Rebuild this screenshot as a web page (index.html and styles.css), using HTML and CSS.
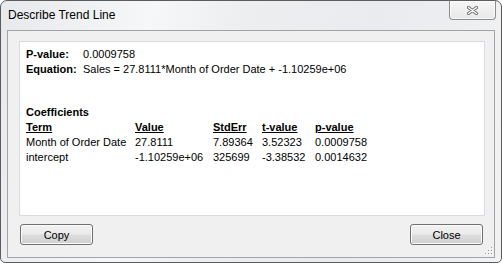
FILE: index.html
```html
<!doctype html>
<html>
<head>
  <link rel="stylesheet" href="styles.css">
</head>
<body>
  <div class="window">
    <div class="titlebar">
      <span class="title">Describe Trend Line</span>
      <button class="caption-close" title="Close">
        <svg width="11" height="9" viewBox="0 0 11 9">
          <path d="M1.5 1.5 L9.5 7.5 M1.5 7.5 L9.5 1.5" stroke="#6f6f6f" stroke-width="3.2" stroke-linecap="round" fill="none"/>
          <path d="M1.5 1.5 L9.5 7.5 M1.5 7.5 L9.5 1.5" stroke="#ffffff" stroke-width="1.3" stroke-linecap="round" fill="none"/>
        </svg>
      </button>
    </div>

    <div class="client">
      <div class="panel">
        <div class="summary">
          <b>P-value:</b><span>0.0009758</span>
          <b>Equation:</b><span>Sales = 27.8111*Month of Order Date + -1.10259e+06</span>
        </div>

        <div class="coef-title">Coefficients</div>
        <div class="coef-table">
          <span class="th">Term</span>
          <span class="th">Value</span>
          <span class="th">StdErr</span>
          <span class="th">t-value</span>
          <span class="th">p-value</span>

          <span>Month of Order Date</span>
          <span>27.8111</span>
          <span>7.89364</span>
          <span>3.52323</span>
          <span>0.0009758</span>

          <span>intercept</span>
          <span>-1.10259e+06</span>
          <span>325699</span>
          <span>-3.38532</span>
          <span>0.0014632</span>
        </div>
      </div>

      <div class="actions">
        <button class="btn">Copy</button>
        <button class="btn">Close</button>
      </div>

      <svg class="grip" width="8" height="8" viewBox="0 0 8 8">
        <rect x="6" y="0" width="1" height="1" fill="#9a9a9a"/>
        <rect x="3" y="3" width="1" height="1" fill="#9a9a9a"/>
        <rect x="6" y="3" width="1" height="1" fill="#9a9a9a"/>
        <rect x="0" y="6" width="1" height="1" fill="#9a9a9a"/>
        <rect x="3" y="6" width="1" height="1" fill="#9a9a9a"/>
        <rect x="6" y="6" width="1" height="1" fill="#9a9a9a"/>
        <rect x="7" y="1" width="1" height="1" fill="#ffffff"/>
        <rect x="4" y="4" width="1" height="1" fill="#ffffff"/>
        <rect x="7" y="4" width="1" height="1" fill="#ffffff"/>
        <rect x="1" y="7" width="1" height="1" fill="#ffffff"/>
        <rect x="4" y="7" width="1" height="1" fill="#ffffff"/>
        <rect x="7" y="7" width="1" height="1" fill="#ffffff"/>
      </svg>
    </div>
  </div>
</body>
</html>
```

FILE: styles.css
```css
html, body {
  margin: 0;
  background: #ffffff;
  font-family: "Liberation Sans", Arial, sans-serif;
  font-size: 11px;
  color: #000;
}
.window {
  box-sizing: border-box;
  width: 502px;
  height: 263px;
  border: 1px solid #5c5c5c;
  border-radius: 7px 7px 5px 5px;
  padding: 0 6px 4px 6px;
  display: flex;
  flex-direction: column;
  background: linear-gradient(100deg, #e7e9ec 0%, #f6f7f8 28%, #eceef0 45%, #e9ebee 70%, #f1f2f4 100%);
}
.titlebar {
  height: 29px;
  display: flex;
  justify-content: space-between;
  align-items: flex-start;
  margin-right: -1px;
}
.title {
  padding: 7px 0 0 1px;
  font-size: 12px;
  line-height: 14px;
  color: #000;
}
.caption-close {
  box-sizing: border-box;
  width: 47px;
  height: 20px;
  margin-top: -1px;
  padding: 0;
  border: 1px solid #8c8c8c;
  border-top-color: #5c5c5c;
  border-radius: 0 0 4px 4px;
  background: linear-gradient(#f6f6f6, #e8e8e8);
  box-shadow: inset 0 0 0 1px rgba(255, 255, 255, 0.7);
  display: flex;
  align-items: center;
  justify-content: center;
}
.client {
  position: relative;
  flex: 1;
  border: 1px solid #a3a3a3;
  background: #f0f0f0;
  display: flex;
  flex-direction: column;
}
.panel {
  box-sizing: border-box;
  height: 175px;
  margin: 10px 9px 0 11px;
  padding: 5px 6px;
  border: 1px solid #d6dce2;
  background: #ffffff;
  line-height: 15px;
}
.summary {
  display: grid;
  grid-template-columns: 57px auto;
}
.coef-title {
  margin-top: 28px;
  font-weight: bold;
}
.coef-table {
  display: grid;
  grid-template-columns: 109px 78px 49px 53px auto;
}
.th {
  font-weight: bold;
  text-decoration: underline;
}
.actions {
  display: flex;
  justify-content: space-between;
  margin: 8px 11px 0 12px;
}
.btn {
  box-sizing: border-box;
  width: 73px;
  height: 21px;
  padding: 0;
  border: 1px solid #707070;
  border-radius: 3px;
  background: linear-gradient(#f2f2f2 0%, #ebebeb 48%, #dddddd 52%, #cfcfcf 100%);
  box-shadow: inset 0 0 0 1px #fbfbfb;
  font-family: "Liberation Sans", Arial, sans-serif;
  font-size: 11px;
  color: #000;
}
.grip {
  position: absolute;
  right: 1px;
  bottom: 2px;
}
```
